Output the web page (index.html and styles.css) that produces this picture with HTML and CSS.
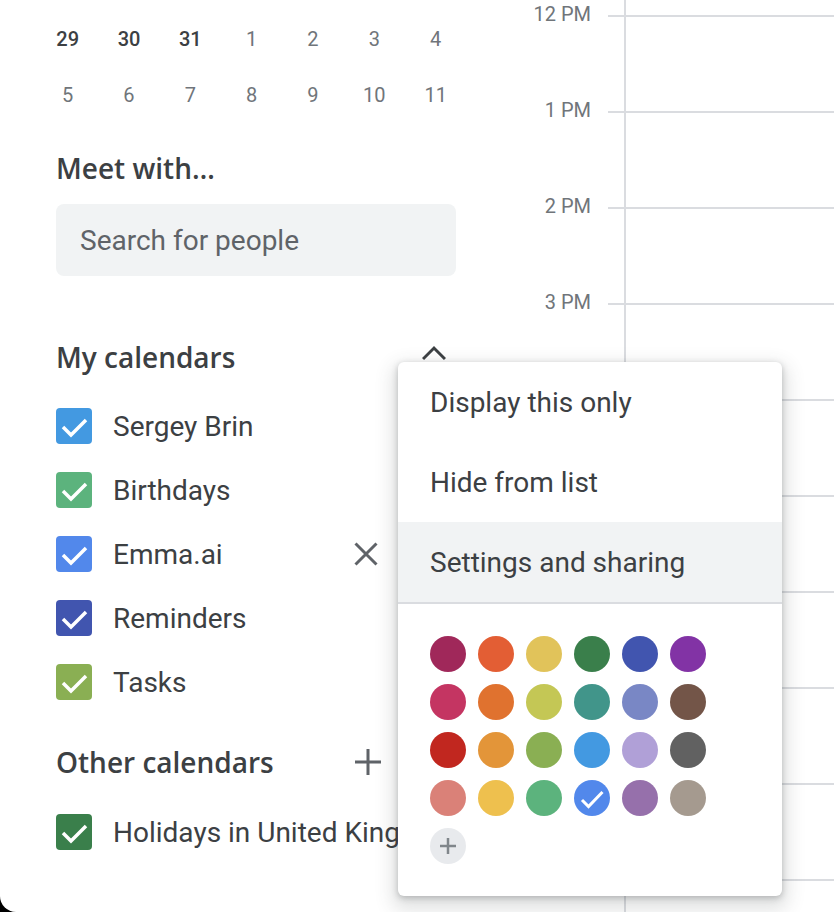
FILE: index.html
```html
<!DOCTYPE html>
<html lang="en">
<head>
    <meta charset="UTF-8">
    <meta name="viewport" content="width=device-width, initial-scale=1.0">
    <title>Calendar</title>
    <link rel="stylesheet" href="styles.css">
</head>
<body>
    <div class="app">
        <aside class="sidebar">
            <div class="minical">
                <span class="day current">29</span>
                <span class="day current">30</span>
                <span class="day current">31</span>
                <span class="day">1</span>
                <span class="day">2</span>
                <span class="day">3</span>
                <span class="day">4</span>
                <span class="day">5</span>
                <span class="day">6</span>
                <span class="day">7</span>
                <span class="day">8</span>
                <span class="day">9</span>
                <span class="day">10</span>
                <span class="day">11</span>
            </div>

            <h2 class="section-title meet-title">Meet with…</h2>
            <input class="people-search" type="text" placeholder="Search for people">

            <div class="section-head my-head">
                <h2 class="section-title">My calendars</h2>
                <button class="icon-btn">
                    <svg width="24" height="24" viewBox="0 0 24 24"><polyline points="1,14 12,3 23,14" fill="none" stroke="#3c4043" stroke-width="3"/></svg>
                </button>
            </div>

            <ul class="cal-list">
                <li class="cal-item">
                    <span class="check peacock"><svg width="36" height="36" viewBox="0 0 36 36"><path d="M7 19 L15 27 L30 12" fill="none" stroke="#fff" stroke-width="3.5"/></svg></span>
                    <span class="cal-name">Sergey Brin</span>
                </li>
                <li class="cal-item">
                    <span class="check sage"><svg width="36" height="36" viewBox="0 0 36 36"><path d="M7 19 L15 27 L30 12" fill="none" stroke="#fff" stroke-width="3.5"/></svg></span>
                    <span class="cal-name">Birthdays</span>
                </li>
                <li class="cal-item">
                    <span class="check cobalt"><svg width="36" height="36" viewBox="0 0 36 36"><path d="M7 19 L15 27 L30 12" fill="none" stroke="#fff" stroke-width="3.5"/></svg></span>
                    <span class="cal-name">Emma.ai</span>
                    <div class="cal-actions">
                        <button class="icon-btn wide">
                            <svg width="24" height="24" viewBox="0 0 24 24"><path d="M1.5 1.5 L22.5 22.5 M22.5 1.5 L1.5 22.5" fill="none" stroke="#5f6368" stroke-width="3"/></svg>
                        </button>
                    </div>
                </li>
                <li class="cal-item">
                    <span class="check blueberry"><svg width="36" height="36" viewBox="0 0 36 36"><path d="M7 19 L15 27 L30 12" fill="none" stroke="#fff" stroke-width="3.5"/></svg></span>
                    <span class="cal-name">Reminders</span>
                </li>
                <li class="cal-item">
                    <span class="check pistachio"><svg width="36" height="36" viewBox="0 0 36 36"><path d="M7 19 L15 27 L30 12" fill="none" stroke="#fff" stroke-width="3.5"/></svg></span>
                    <span class="cal-name">Tasks</span>
                </li>
            </ul>

            <div class="section-head other-head">
                <h2 class="section-title">Other calendars</h2>
                <button class="icon-btn">
                    <svg width="28" height="28" viewBox="0 0 28 28"><path d="M14 1 V27 M1 14 H27" fill="none" stroke="#5f6368" stroke-width="3"/></svg>
                </button>
                <button class="icon-btn">
                    <svg width="24" height="24" viewBox="0 0 24 24"><polyline points="1,14 12,3 23,14" fill="none" stroke="#3c4043" stroke-width="3"/></svg>
                </button>
            </div>

            <ul class="cal-list other-list">
                <li class="cal-item">
                    <span class="check basil"><svg width="36" height="36" viewBox="0 0 36 36"><path d="M7 19 L15 27 L30 12" fill="none" stroke="#fff" stroke-width="3.5"/></svg></span>
                    <span class="cal-name clipped">Holidays in United Kingdom</span>
                </li>
            </ul>
        </aside>

        <main class="timeline">
            <div class="hour-row top-row">
                <div class="hour-label"></div>
                <div class="hour-tick"></div>
                <div class="hour-cell"></div>
            </div>
            <div class="hour-row"><div class="hour-label"><span>12 PM</span></div><div class="hour-tick"></div><div class="hour-cell"></div></div>
            <div class="hour-row"><div class="hour-label"><span>1 PM</span></div><div class="hour-tick"></div><div class="hour-cell"></div></div>
            <div class="hour-row"><div class="hour-label"><span>2 PM</span></div><div class="hour-tick"></div><div class="hour-cell"></div></div>
            <div class="hour-row"><div class="hour-label"><span>3 PM</span></div><div class="hour-tick"></div><div class="hour-cell"></div></div>
            <div class="hour-row"><div class="hour-label"></div><div class="hour-tick"></div><div class="hour-cell"></div></div>
            <div class="hour-row"><div class="hour-label"></div><div class="hour-tick"></div><div class="hour-cell"></div></div>
            <div class="hour-row"><div class="hour-label"></div><div class="hour-tick"></div><div class="hour-cell"></div></div>
            <div class="hour-row"><div class="hour-label"></div><div class="hour-tick"></div><div class="hour-cell"></div></div>
            <div class="hour-row"><div class="hour-label"></div><div class="hour-tick"></div><div class="hour-cell"></div></div>
            <div class="hour-row"><div class="hour-label"></div><div class="hour-tick"></div><div class="hour-cell"></div></div>
        </main>

        <div class="popup">
            <ul class="menu">
                <li class="menu-item">Display this only</li>
                <li class="menu-item">Hide from list</li>
                <li class="menu-item hover">Settings and sharing</li>
            </ul>
            <div class="palette">
                <span class="swatch" style="background:#a0285a"></span>
                <span class="swatch" style="background:#e35e34"></span>
                <span class="swatch" style="background:#e1c35a"></span>
                <span class="swatch" style="background:#3a7f4b"></span>
                <span class="swatch" style="background:#4155af"></span>
                <span class="swatch" style="background:#8233a5"></span>

                <span class="swatch" style="background:#c43562"></span>
                <span class="swatch" style="background:#e0722f"></span>
                <span class="swatch" style="background:#c4c755"></span>
                <span class="swatch" style="background:#41958a"></span>
                <span class="swatch" style="background:#7987c5"></span>
                <span class="swatch" style="background:#735548"></span>

                <span class="swatch" style="background:#c1271f"></span>
                <span class="swatch" style="background:#e39539"></span>
                <span class="swatch" style="background:#8aaf53"></span>
                <span class="swatch" style="background:#4399e1"></span>
                <span class="swatch" style="background:#b0a0d7"></span>
                <span class="swatch" style="background:#616161"></span>

                <span class="swatch" style="background:#da8178"></span>
                <span class="swatch" style="background:#eec04e"></span>
                <span class="swatch" style="background:#5cb37d"></span>
                <span class="swatch selected" style="background:#5288eb">
                    <svg width="36" height="36" viewBox="0 0 36 36"><path d="M8 20 L14.5 26.5 L28.5 12" fill="none" stroke="#fff" stroke-width="3"/></svg>
                </span>
                <span class="swatch" style="background:#9670ab"></span>
                <span class="swatch" style="background:#a59a8f"></span>

                <span class="swatch add">
                    <svg width="18" height="18" viewBox="0 0 18 18"><path d="M9 1 V17 M1 9 H17" fill="none" stroke="#80868b" stroke-width="2.5"/></svg>
                </span>
            </div>
        </div>
    </div>
</body>
</html>
```

FILE: styles.css
```css
* {
    margin: 0;
    padding: 0;
    box-sizing: border-box;
}

body {
    background: #000;
    font-family: Roboto, 'Liberation Sans', sans-serif;
    color: #3c4043;
}

ul {
    list-style: none;
}

button {
    background: none;
    border: none;
    cursor: pointer;
}

.app {
    position: relative;
    width: 834px;
    height: 912px;
    background: #fff;
    display: flex;
    overflow: hidden;
    border-bottom-left-radius: 16px;
}

/* Sidebar */

.sidebar {
    width: 480px;
    flex-shrink: 0;
    padding: 11px 24px 0 56px;
}

.minical {
    display: grid;
    grid-template-columns: repeat(7, 61.33px);
    grid-auto-rows: 56px;
    margin-left: -19px;
}

.day {
    display: flex;
    align-items: center;
    justify-content: center;
    font-size: 20px;
    color: #70757a;
}

.day.current {
    color: #3c4043;
    font-weight: 500;
}

.section-title {
    font-family: 'Open Sans', Roboto, sans-serif;
    font-size: 28px;
    font-weight: 600;
    line-height: 40px;
    color: #3c4043;
    flex: 1;
}

.meet-title {
    margin-top: 25px;
}

.people-search {
    display: block;
    width: 100%;
    height: 72px;
    margin-top: 16px;
    padding: 0 24px;
    border: none;
    border-radius: 8px;
    background: #f1f3f4;
    font-family: Roboto, sans-serif;
    font-size: 28px;
    color: #3c4043;
    outline: none;
}

.people-search::placeholder {
    color: #5f6368;
}

.section-head {
    display: flex;
    align-items: center;
    gap: 22px;
    height: 40px;
}

.my-head {
    margin-top: 61px;
}

.other-head {
    margin-top: 28px;
}

.icon-btn {
    width: 44px;
    height: 40px;
    display: flex;
    align-items: center;
    justify-content: center;
}

.icon-btn.wide {
    width: 48px;
}

.cal-list {
    margin-top: 17px;
}

.other-list {
    margin-top: 18px;
}

.cal-item {
    display: flex;
    align-items: center;
    height: 64px;
}

.check {
    width: 36px;
    height: 36px;
    border-radius: 4px;
    flex-shrink: 0;
    margin-right: 21px;
}

.check svg {
    display: block;
}

.peacock { background: #4399e1; }
.sage { background: #5cb37d; }
.cobalt { background: #5288eb; }
.blueberry { background: #4155af; }
.pistachio { background: #8aaf53; }
.basil { background: #3a7f4b; }

.cal-name {
    flex: 1;
    font-size: 28px;
    white-space: nowrap;
    color: #3c4043;
}

.cal-name.clipped {
    overflow: hidden;
}

.cal-actions {
    display: flex;
    margin-right: 66px;
}

/* Day grid */

.timeline {
    flex: 1;
    display: flex;
    flex-direction: column;
}

.hour-row {
    display: flex;
    height: 96px;
    flex-shrink: 0;
}

.hour-row.top-row {
    height: 15px;
}

.hour-label {
    width: 128px;
    padding-right: 17px;
    text-align: right;
    font-size: 20px;
    color: #70757a;
}

.hour-label span {
    display: block;
    line-height: 24px;
    margin-top: -13px;
}

.hour-tick {
    width: 16px;
    border-top: 2px solid #dadce0;
}

.hour-cell {
    flex: 1;
    border-top: 2px solid #dadce0;
    border-left: 2px solid #dadce0;
}

.top-row .hour-tick,
.top-row .hour-cell {
    border-top: none;
}

/* Popup menu */

.popup {
    position: absolute;
    left: 398px;
    top: 362px;
    width: 384px;
    background: #fff;
    border-radius: 6px;
    box-shadow: 0 8px 18px 6px rgba(60, 64, 67, 0.15), 0 2px 6px rgba(60, 64, 67, 0.3);
    z-index: 10;
}

.menu {
    border-bottom: 2px solid #dadce0;
}

.menu-item {
    height: 80px;
    display: flex;
    align-items: center;
    padding-left: 32px;
    font-size: 28px;
    color: #3c4043;
}

.menu-item.hover {
    background: #f1f3f4;
}

.palette {
    display: grid;
    grid-template-columns: repeat(6, 36px);
    grid-auto-rows: 36px;
    gap: 12px;
    padding: 32px;
}

.swatch {
    width: 36px;
    height: 36px;
    border-radius: 50%;
    display: flex;
    align-items: center;
    justify-content: center;
}

.swatch.add {
    background: #e8eaed;
}
```
